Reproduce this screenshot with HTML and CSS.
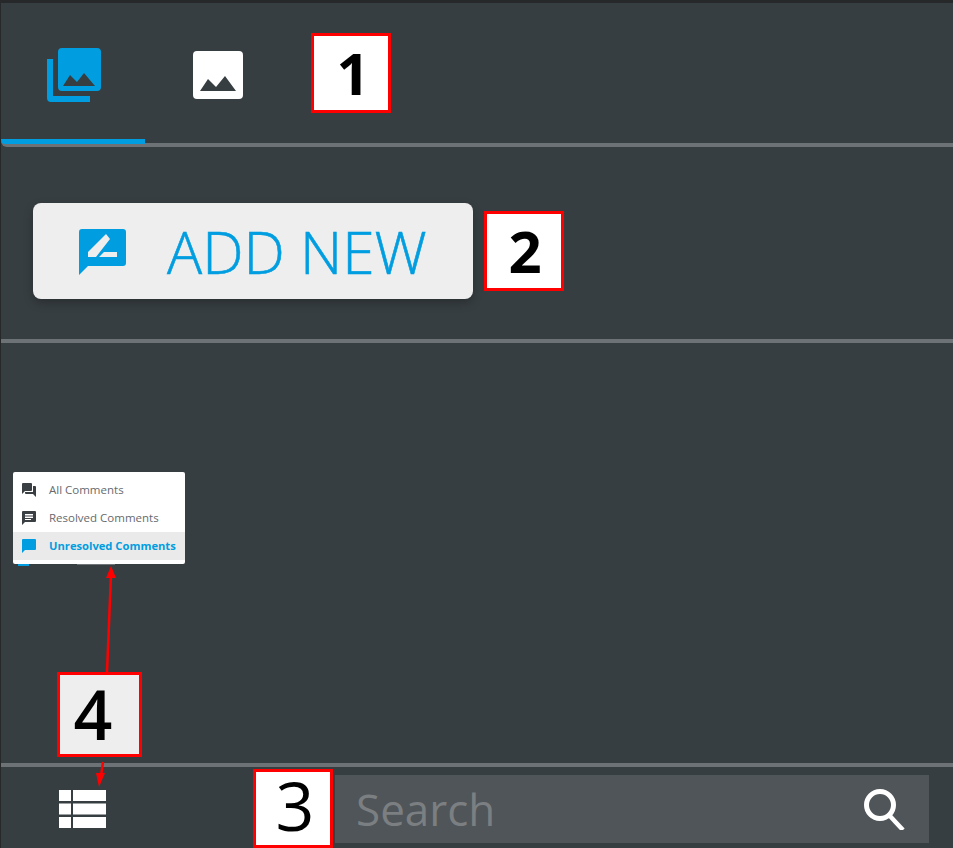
FILE: index.html
```html
<!DOCTYPE html>
<html lang="en">
<head>
    <meta charset="UTF-8">
    <meta name="viewport" content="width=device-width, initial-scale=1">
    <title>Comments</title>
    <link rel="stylesheet" href="styles.css">
</head>
<body>
<div class="panel">
    <div class="tabs">
        <div class="tab tabActive">
            <svg class="tabIcon" width="54" height="54" viewBox="0 0 54 54">
                <path fill="#009ee0" d="M0 11h6v37h37v6H4a4 4 0 0 1-4-4z"/>
                <path fill="#009ee0" fill-rule="evenodd" d="M15 0h35a4 4 0 0 1 4 4v35a4 4 0 0 1-4 4H15a4 4 0 0 1-4-4V4a4 4 0 0 1 4-4zM16 38h32L37 25l-7 9-7-7z"/>
            </svg>
        </div>
        <div class="tab">
            <svg class="tabIcon" width="50" height="48" viewBox="0 0 50 48">
                <path fill="#fff" fill-rule="evenodd" d="M4 0h42a4 4 0 0 1 4 4v40a4 4 0 0 1-4 4H4a4 4 0 0 1-4-4V4a4 4 0 0 1 4-4zM7 40h36L32 25l-9 11-8-8z"/>
            </svg>
        </div>
    </div>

    <div class="addSection">
        <button class="addButton" type="button">
            <svg width="48" height="47" viewBox="0 0 48 47">
                <path fill="#009ee0" fill-rule="evenodd" d="M3 0h41a3 3 0 0 1 3 3v31a3 3 0 0 1-3 3H9l-9 9V3a3 3 0 0 1 3-3zM9 23v5h8L31 10l-4-5zM20 28h18v-5H25z"/>
            </svg>
            <span>ADD NEW</span>
        </button>
    </div>

    <div class="middle"></div>

    <div class="bottomBar">
        <div class="viewToggle">
            <svg width="47" height="38" viewBox="0 0 47 38">
                <path fill="#fff" d="M0 0h12v11H0zM14 0h33v11H14zM0 13.500h12v11H0zM14 13.500h33v11H14zM0 27h12v11H0zM14 27h33v11H14z"/>
            </svg>
        </div>
        <div class="searchBox">
            <span class="searchText">Search</span>
            <svg width="42" height="42" viewBox="0 0 42 42">
                <circle cx="17" cy="17" r="13.500" fill="none" stroke="#fff" stroke-width="5"/>
                <path stroke="#fff" stroke-width="4.500" d="M26 27l14 15"/>
            </svg>
        </div>
    </div>
</div>

<div class="menuPeek">
    <span class="peekIcon"></span>
    <span class="peekText"></span>
</div>

<div class="commentMenu">
    <div class="menuItem">
        <svg width="14" height="14" viewBox="0 0 14 14">
            <path fill="#3a3f44" d="M0 1a1 1 0 0 1 1-1h8a1 1 0 0 1 1 1v6a1 1 0 0 1-1 1H3l-3 3zM11 3h2a1 1 0 0 1 1 1v10l-3-3H4a1 1 0 0 1-1-1V9h8z"/>
        </svg>
        <span>All Comments</span>
    </div>
    <div class="menuItem">
        <svg width="14" height="14" viewBox="0 0 14 14">
            <path fill="#3a3f44" fill-rule="evenodd" d="M1 0h12a1 1 0 0 1 1 1v9a1 1 0 0 1-1 1H3l-3 3V1a1 1 0 0 1 1-1zM3 3v1.500h8V3zM3 5.500V7h8V5.500zM3 8v1h6V8z"/>
        </svg>
        <span>Resolved Comments</span>
    </div>
    <div class="menuItem menuItemActive">
        <svg width="14" height="14" viewBox="0 0 14 14">
            <path fill="#009ee0" d="M1 0h12a1 1 0 0 1 1 1v9a1 1 0 0 1-1 1H3l-3 3V1a1 1 0 0 1 1-1z"/>
        </svg>
        <span>Unresolved Comments</span>
    </div>
</div>

<svg class="arrows" width="953" height="848" viewBox="0 0 953 848">
    <path stroke="#f00" stroke-width="2.500" fill="none" d="M107 672l4-98"/>
    <path fill="#f00" d="M111 566l5 12h-10z"/>
    <path stroke="#f00" stroke-width="2.500" fill="none" d="M103 762l-2 14"/>
    <path fill="#f00" d="M99 787l-3-14h9z"/>
</svg>

<div class="callout callout1">1</div>
<div class="callout callout2">2</div>
<div class="callout callout3">3</div>
<div class="callout callout4">4</div>
</body>
</html>
```

FILE: styles.css
```css
html, body {
    margin: 0;
    padding: 0;
}

body {
    position: relative;
    width: 953px;
    height: 848px;
    overflow: hidden;
    background-color: #373e41;
    font-family: "Open Sans", sans-serif;
}

.panel {
    display: flex;
    flex-direction: column;
    box-sizing: border-box;
    height: 848px;
    border-top: 3px solid #262829;
    border-left: 1px solid #262829;
}

.tabs {
    display: flex;
    flex: none;
    height: 140px;
    border-bottom: 4px solid #6d7276;
    border-bottom-left-radius: 6px;
}

.tab {
    display: flex;
    justify-content: center;
    box-sizing: border-box;
    height: 141px;
    width: 144px;
}

.tabActive {
    border-bottom: 5px solid #009ee0;
    border-bottom-left-radius: 4px;
}

.tabIcon {
    margin-top: 45px;
    margin-left: 2px;
}

.tab + .tab .tabIcon {
    margin-top: 48px;
}

.addSection {
    flex: none;
    box-sizing: border-box;
    height: 196px;
    padding: 56px 0 0 32px;
    border-bottom: 4px solid #6d7276;
}

.addButton {
    display: flex;
    align-items: center;
    width: 440px;
    height: 96px;
    padding: 0 0 0 46px;
    border: none;
    border-radius: 8px;
    background-color: #eeeeee;
    box-shadow: 0 4px 10px rgba(0, 0, 0, 0.25);
    color: #009ee0;
    font-family: "Open Sans", sans-serif;
    font-size: 58.500px;
    font-weight: 300;
    -webkit-text-stroke: 0.6px #009ee0;
}

.addButton svg {
    flex: none;
    margin-top: 2px;
}

.addButton span {
    margin-left: 40px;
}

.middle {
    flex: none;
    height: 420px;
    border-bottom: 4px solid #6d7276;
}

.bottomBar {
    display: flex;
    flex: 1;
    align-items: flex-start;
}

.viewToggle {
    display: flex;
    flex: none;
    box-sizing: border-box;
    width: 334px;
    padding: 23px 0 0 58px;
}

.searchBox {
    display: flex;
    align-items: center;
    justify-content: space-between;
    box-sizing: border-box;
    width: 594px;
    height: 68px;
    margin-top: 8px;
    padding: 0 24px 0 21px;
    background-color: #4f5559;
}

.searchText {
    color: #7b7f82;
    font-size: 44px;
}

.commentMenu {
    position: absolute;
    top: 472px;
    left: 13px;
    box-sizing: border-box;
    width: 172px;
    height: 92px;
    padding-top: 4px;
    border-radius: 2px;
    background-color: #fff;
}

.menuItem {
    display: flex;
    align-items: center;
    gap: 13px;
    box-sizing: border-box;
    height: 28px;
    padding-bottom: 2px;
    padding-left: 9px;
    color: #666a6d;
    font-size: 11.500px;
}

.menuItem svg {
    margin-top: 1px;
}

.menuItemActive {
    background-color: #eaeaea;
    color: #009ee0;
    font-size: 11.200px;
    font-weight: 700;
}

/* the row under the menu, only its top edge shows */
.menuPeek {
    position: absolute;
    top: 564px;
    left: 18px;
    display: flex;
    align-items: flex-start;
    height: 2px;
}

.peekIcon {
    width: 11px;
    height: 2px;
    background-color: #009ee0;
}

.peekText {
    width: 38px;
    height: 1px;
    margin-left: 48px;
    background-color: #6f7478;
}

.arrows {
    position: absolute;
    top: 0;
    left: 0;
}

.callout {
    position: absolute;
    display: flex;
    align-items: center;
    justify-content: center;
    box-sizing: border-box;
    border: 3px solid #f00;
    background-color: #fff;
    color: #000;
    font-size: 58px;
    font-weight: 700;
    line-height: 1;
}

.callout1 {
    top: 33px;
    left: 311px;
    width: 80px;
    height: 80px;
    padding-left: 4px;
}

.callout2 {
    top: 211px;
    left: 484px;
    width: 80px;
    height: 80px;
    padding-left: 2px;
}

.callout3 {
    top: 769px;
    left: 253px;
    width: 80px;
    height: 79px;
    padding-left: 4px;
    padding-bottom: 7px;
    font-size: 68px;
    font-weight: 500;
}

.callout4 {
    top: 672px;
    left: 57px;
    width: 85px;
    height: 85px;
    padding-right: 13px;
    padding-bottom: 2px;
    background-color: #eeeeee;
    font-size: 68px;
    font-weight: 600;
}
```
